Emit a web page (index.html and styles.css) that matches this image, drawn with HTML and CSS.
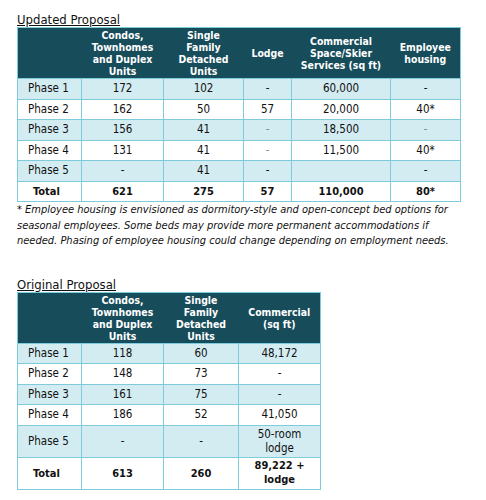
FILE: index.html
```html
<!DOCTYPE html>
<html>
<head>
<meta charset="utf-8">
<link rel="stylesheet" href="styles.css">
</head>
<body>
<div class="page">
  <h2 class="title">Updated Proposal</h2>
  <table class="grid grid-updated">
    <colgroup>
      <col style="width:64px"><col style="width:82px"><col style="width:80px"><col style="width:48px"><col style="width:99px"><col style="width:70px">
    </colgroup>
    <thead>
      <tr>
        <th></th>
        <th>Condos,<br>Townhomes<br>and Duplex<br>Units</th>
        <th>Single<br>Family<br>Detached<br>Units</th>
        <th>Lodge</th>
        <th>Commercial<br>Space/Skier<br>Services (sq ft)</th>
        <th>Employee<br>housing</th>
      </tr>
    </thead>
    <tbody>
      <tr class="shade"><td class="label">Phase 1</td><td>172</td><td>102</td><td>-</td><td>60,000</td><td>-</td></tr>
      <tr><td class="label">Phase 2</td><td>162</td><td>50</td><td>57</td><td>20,000</td><td>40*</td></tr>
      <tr class="shade"><td class="label">Phase 3</td><td>156</td><td>41</td><td class="faint">-</td><td>18,500</td><td class="faint">-</td></tr>
      <tr><td class="label">Phase 4</td><td>131</td><td>41</td><td class="faint">-</td><td>11,500</td><td>40*</td></tr>
      <tr class="shade"><td class="label">Phase 5</td><td>-</td><td>41</td><td>-</td><td></td><td>-</td></tr>
      <tr class="total"><td class="label-total">Total</td><td>621</td><td>275</td><td>57</td><td>110,000</td><td>80*</td></tr>
    </tbody>
  </table>
  <p class="note">* Employee housing is envisioned as dormitory-style and open-concept bed options for seasonal employees. Some beds may provide more permanent accommodations if needed. Phasing of employee housing could change depending on employment needs.</p>

  <h2 class="title title-second">Original Proposal</h2>
  <table class="grid grid-original">
    <colgroup>
      <col style="width:64px"><col style="width:82px"><col style="width:75px"><col style="width:82px">
    </colgroup>
    <thead>
      <tr>
        <th></th>
        <th>Condos,<br>Townhomes<br>and Duplex<br>Units</th>
        <th>Single<br>Family<br>Detached<br>Units</th>
        <th>Commercial<br>(sq ft)</th>
      </tr>
    </thead>
    <tbody>
      <tr class="shade"><td class="label">Phase 1</td><td>118</td><td>60</td><td>48,172</td></tr>
      <tr><td class="label">Phase 2</td><td>148</td><td>73</td><td>-</td></tr>
      <tr class="shade"><td class="label">Phase 3</td><td>161</td><td>75</td><td>-</td></tr>
      <tr><td class="label">Phase 4</td><td>186</td><td>52</td><td>41,050</td></tr>
      <tr class="shade tall"><td class="label">Phase 5</td><td>-</td><td>-</td><td class="twoline">50-room<br>lodge</td></tr>
      <tr class="total tall"><td class="label-total">Total</td><td>613</td><td>260</td><td class="twoline">89,222 +<br>lodge</td></tr>
    </tbody>
  </table>
</div>
</body>
</html>
```

FILE: styles.css
```css
html, body {
  margin: 0;
  padding: 0;
  background: #ffffff;
}

body {
  font-family: "DejaVu Sans Condensed", "DejaVu Sans", sans-serif;
  color: #111111;
}

.page {
  display: flex;
  flex-direction: column;
  align-items: flex-start;
  padding: 12px 0 0 17px;
}

.title {
  margin: 0;
  font-size: 13px;
  font-weight: normal;
  line-height: 15px;
  text-decoration: underline;
  text-underline-offset: 1px;
}

.title-second {
  margin-top: 28px;
}

.grid {
  border-collapse: collapse;
  table-layout: fixed;
  font-size: 11.5px;
}

.grid-updated {
  width: 443px;
}

.grid-original {
  width: 303px;
}

.grid th {
  background: #174c5a;
  color: #ffffff;
  font-weight: bold;
  font-size: 10.4px;
  line-height: 12px;
  height: 50px;
  padding: 0;
  text-align: center;
  vertical-align: middle;
  border-top: 1.5px solid #7ecbdb;
}

.grid th:first-child {
  border-left: 1.5px solid #7ecbdb;
}

.grid th:last-child {
  border-right: 1.5px solid #7ecbdb;
}

.grid td {
  border: 1.5px solid #7ecbdb;
  height: 19.5px;
  padding: 0;
  text-align: center;
  vertical-align: middle;
  line-height: 13px;
}

.grid tr.shade td {
  background: #d3ecf2;
}

.grid tr.tall td {
  height: 31px;
}

.grid td.label {
  text-align: left;
  padding-left: 10px;
}

.grid td.label-total {
  text-align: left;
  padding-left: 15px;
}

.grid tr.total td {
  font-weight: bold;
  font-size: 11px;
}

.grid td.faint {
  color: #8a8a8a;
}

.grid td.twoline {
  line-height: 14px;
}

.note {
  margin: 0;
  width: 443px;
  font-size: 11px;
  font-style: italic;
  line-height: 15.5px;
  color: #111111;
}
```
